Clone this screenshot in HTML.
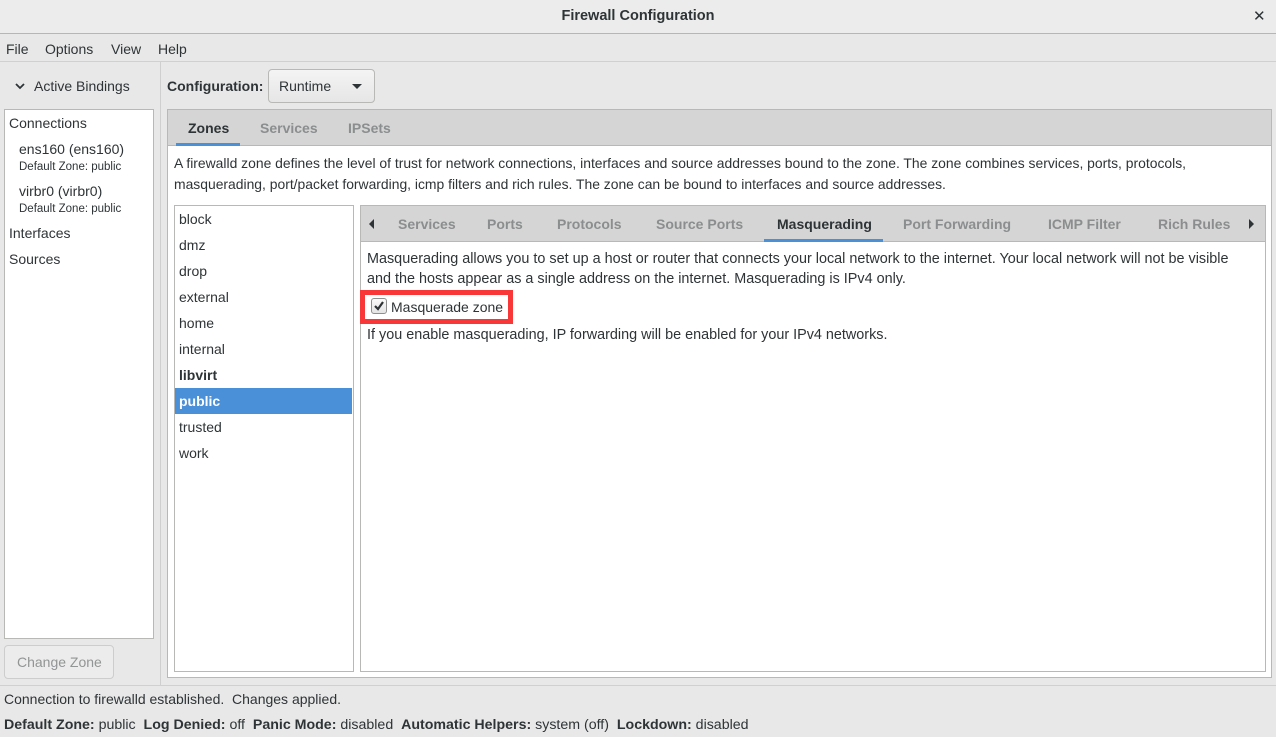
<!DOCTYPE html>
<html><head><meta charset="utf-8"><style>
*{margin:0;padding:0;box-sizing:border-box}
body{width:1276px;height:737px;overflow:hidden;background:#e8e8e8;font-family:"Liberation Sans","DejaVu Sans",sans-serif;font-size:14px;color:#2e3436;position:relative}
.a{position:absolute;white-space:nowrap}
.b{font-weight:bold}
.g{color:#8b8e8f;font-weight:bold}
</style></head><body>
<div class="a" style="left:0;top:0;width:1276px;height:34px;background:#ececec;border-bottom:1px solid #b6b6b3"></div>
<div class="a b" style="left:0;width:1276px;top:8px;text-align:center;font-size:14.5px">Firewall Configuration</div>
<div class="a b" style="left:1253px;top:7px;font-size:15px">✕</div>
<div class="a" style="left:0;top:35px;width:1276px;height:27px;background:#e8e8e8;border-bottom:1px solid #d0d0d0"></div>
<div class="a" style="left:6px;top:41px">File</div>
<div class="a" style="left:45px;top:41px">Options</div>
<div class="a" style="left:111px;top:41px">View</div>
<div class="a" style="left:158px;top:41px">Help</div>
<div class="a" style="left:160px;top:62px;width:1px;height:623px;background:#cfcfcf"></div>
<svg class="a" style="left:14px;top:81px" width="12" height="10"><path d="M2 3 L6 7 L10 3" stroke="#2e3436" stroke-width="1.8" fill="none"/></svg>
<div class="a" style="left:34px;top:78px">Active Bindings</div>
<div class="a" style="left:4px;top:109px;width:150px;height:530px;background:#fff;border:1px solid #b8b8b5"></div>
<div class="a" style="left:9px;top:115px">Connections</div>
<div class="a" style="left:19px;top:141px">ens160 (ens160)</div>
<div class="a" style="left:19px;top:161px;font-size:11.5px">Default Zone: public</div>
<div class="a" style="left:19px;top:183px">virbr0 (virbr0)</div>
<div class="a" style="left:19px;top:203px;font-size:11.5px">Default Zone: public</div>
<div class="a" style="left:9px;top:225px">Interfaces</div>
<div class="a" style="left:9px;top:251px">Sources</div>
<div class="a" style="left:4px;top:645px;width:110px;height:34px;border:1px solid #cdcdcd;border-radius:4px;background:#ececec"></div>
<div class="a" style="left:17px;top:654px;color:#929595">Change Zone</div>
<div class="a b" style="left:167px;top:78px">Configuration:</div>
<div class="a" style="left:268px;top:69px;width:107px;height:34px;border:1px solid #b8b8b5;border-radius:4px;background:linear-gradient(#f4f4f4,#e6e6e6)"></div>
<div class="a" style="left:279px;top:78px">Runtime</div>
<svg class="a" style="left:351px;top:82px" width="12" height="8"><path d="M1 2 L11 2 L6 7Z" fill="#2e3436"/></svg>
<div class="a" style="left:167px;top:109px;width:1105px;height:569px;background:#fff;border:1px solid #b8b8b5"></div>
<div class="a" style="left:168px;top:110px;width:1103px;height:36px;background:#d5d5d5;border-bottom:1px solid #b8b8b5"></div>
<div class="a b" style="left:188px;top:120px">Zones</div>
<div class="a" style="left:176px;top:143px;width:64px;height:3px;background:#4a90d9"></div>
<div class="a g" style="left:260px;top:120px">Services</div>
<div class="a g" style="left:348px;top:120px">IPSets</div>
<div class="a" style="left:174px;top:155px;font-size:13.9px">A firewalld zone defines the level of trust for network connections, interfaces and source addresses bound to the zone. The zone combines services, ports, protocols,</div>
<div class="a" style="left:174px;top:176px;font-size:13.9px">masquerading, port/packet forwarding, icmp filters and rich rules. The zone can be bound to interfaces and source addresses.</div>
<div class="a" style="left:174px;top:205px;width:180px;height:467px;background:#fff;border:1px solid #b8b8b5"></div>
<div class="a" style="left:179px;top:211px">block</div>
<div class="a" style="left:179px;top:237px">dmz</div>
<div class="a" style="left:179px;top:263px">drop</div>
<div class="a" style="left:179px;top:289px">external</div>
<div class="a" style="left:179px;top:315px">home</div>
<div class="a" style="left:179px;top:341px">internal</div>
<div class="a b" style="left:179px;top:367px">libvirt</div>
<div class="a" style="left:175px;top:388px;width:177px;height:26px;background:#4a90d9"></div>
<div class="a b" style="left:179px;top:393px;color:#fff">public</div>
<div class="a" style="left:179px;top:419px">trusted</div>
<div class="a" style="left:179px;top:445px">work</div>
<div class="a" style="left:360px;top:205px;width:906px;height:467px;background:#fff;border:1px solid #b8b8b5"></div>
<div class="a" style="left:361px;top:206px;width:904px;height:36px;background:#d5d5d5;border-bottom:1px solid #b8b8b5"></div>
<svg class="a" style="left:368px;top:218px" width="8" height="12"><path d="M6 1 L1 6 L6 11Z" fill="#2e3436"/></svg>
<svg class="a" style="left:1247px;top:218px" width="8" height="12"><path d="M2 1 L7 6 L2 11Z" fill="#2e3436"/></svg>
<div class="a g" style="left:398px;top:216px">Services</div>
<div class="a g" style="left:487px;top:216px">Ports</div>
<div class="a g" style="left:557px;top:216px">Protocols</div>
<div class="a g" style="left:656px;top:216px">Source Ports</div>
<div class="a b" style="left:777px;top:216px">Masquerading</div>
<div class="a" style="left:764px;top:239px;width:119px;height:3px;background:#4a90d9"></div>
<div class="a g" style="left:903px;top:216px">Port Forwarding</div>
<div class="a g" style="left:1048px;top:216px">ICMP Filter</div>
<div class="a g" style="left:1158px;top:216px">Rich Rules</div>
<div class="a" style="left:367px;top:251px;font-size:14.4px">Masquerading allows you to set up a host or router that connects your local network to the internet. Your local network will not be visible</div>
<div class="a" style="left:367px;top:271px;font-size:14.4px">and the hosts appear as a single address on the internet. Masquerading is IPv4 only.</div>
<div class="a" style="left:360px;top:290px;width:153px;height:34px;border:5px solid #f83838"></div>
<div class="a" style="left:371px;top:298px;width:16px;height:16px;border:1px solid #8f8f8f;border-radius:3px;background:linear-gradient(#fafafa,#e4e4e4)"></div>
<svg class="a" style="left:373px;top:300px" width="12" height="12"><path d="M2 6 L5 9 L10 2" stroke="#2e3436" stroke-width="2.2" fill="none"/></svg>
<div class="a" style="left:391px;top:299px">Masquerade zone</div>
<div class="a" style="left:367px;top:327px;font-size:14.4px">If you enable masquerading, IP forwarding will be enabled for your IPv4 networks.</div>
<div class="a" style="left:0;top:685px;width:1276px;height:1px;background:#d0d0d0"></div>
<div class="a" style="left:4px;top:691px">Connection to firewalld established.&nbsp; Changes applied.</div>
<div class="a" style="left:4px;top:717px;font-size:14.2px"><b>Default Zone:</b> public&nbsp; <b>Log Denied:</b> off&nbsp; <b>Panic Mode:</b> disabled&nbsp; <b>Automatic Helpers:</b> system (off)&nbsp; <b>Lockdown:</b> disabled</div>
</body></html>
